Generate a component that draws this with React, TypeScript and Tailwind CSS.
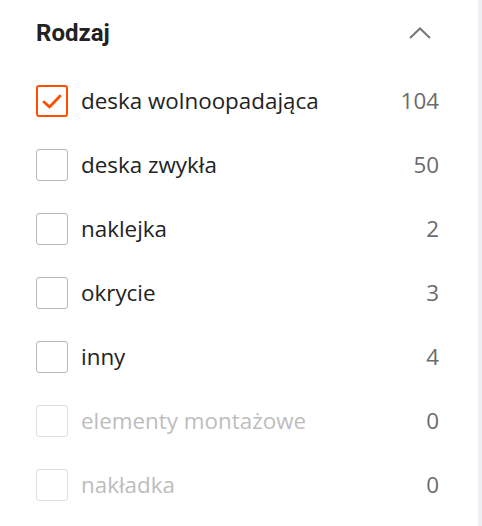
import React from "react";

type Item = { label: string; count: number; checked?: boolean; disabled?: boolean };

const items: Item[] = [
  { label: "deska wolnoopadająca", count: 104, checked: true },
  { label: "deska zwykła", count: 50 },
  { label: "naklejka", count: 2 },
  { label: "okrycie", count: 3 },
  { label: "inny", count: 4 },
  { label: "elementy montażowe", count: 0, disabled: true },
  { label: "nakładka", count: 0, disabled: true },
];

function Checkbox({ checked, disabled }: { checked?: boolean; disabled?: boolean }) {
  if (checked) {
    return (
      <span className="flex h-[32px] w-[32px] shrink-0 items-center justify-center rounded-[3px] border-2 border-[#ff5000]">
        <svg width="22" height="22" viewBox="0 0 22 22" fill="none">
          <path d="M3 12 L8.5 17 L19 6" stroke="#ff5000" strokeWidth="2.8" strokeLinecap="round" strokeLinejoin="round" />
        </svg>
      </span>
    );
  }
  return (
    <span
      className={
        disabled
          ? "h-[32px] w-[32px] shrink-0 rounded-[3px] border border-[#dedede]"
          : "h-[32px] w-[32px] shrink-0 rounded-[3px] border border-[#b9b9b9]"
      }
    />
  );
}

export default function App() {
  return (
    <div className="flex h-[526px] w-[482px] bg-white">
      <div className="flex-1 pl-[36px] pr-[39px]">
        <div className="flex h-[66px] items-center justify-between">
          <h2 className="font-['Roboto',sans-serif] text-[24px] font-bold text-[#222]">Rodzaj</h2>
          <svg width="22" height="12" viewBox="0 0 22 12" fill="none" className="mr-[8px]">
            <path d="M1 11 L11 1.5 L21 11" stroke="#777" strokeWidth="2" />
          </svg>
        </div>
        <ul className="mt-[3px] font-['Open_Sans',sans-serif] text-[22.4px]">
          {items.map((it) => (
            <li key={it.label} className="flex h-[64px] items-center">
              <Checkbox checked={it.checked} disabled={it.disabled} />
              <span className={it.disabled ? "ml-[13px] flex-1 text-[#bdbdbd]" : "ml-[13px] flex-1 text-[#222]"}>
                {it.label}
              </span>
              <span className="text-[#6b6b6b]">{it.count}</span>
            </li>
          ))}
        </ul>
      </div>
      <div className="w-[4px] bg-[#eceff3]" />
    </div>
  );
}
